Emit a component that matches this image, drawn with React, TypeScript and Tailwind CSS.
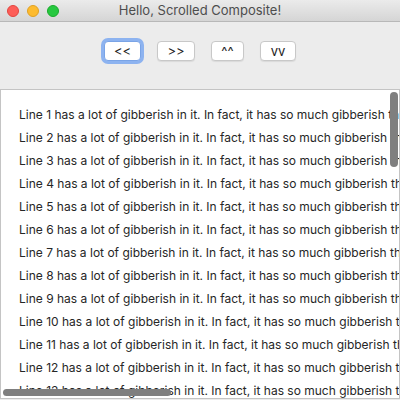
import React from "react";

const lines = Array.from({ length: 13 }, (_, i) => i + 1);

function Btn({ label, focused }: { label: string; focused?: boolean }) {
  return (
    <div
      className={
        "h-[20px] flex items-center justify-center bg-white rounded-[4px] text-[13px] leading-none text-[#1e1e1e] " +
        (focused
          ? "border border-[#7aa4e6] ring-[3px] ring-[#8db3f0]"
          : "border border-[#c8c8c8] shadow-[0_1px_1px_rgba(0,0,0,0.08)]")
      }
    >
      {label}
    </div>
  );
}

export default function App() {
  return (
    <div
      className="w-[400px] h-[400px] bg-[#ececec] flex flex-col overflow-hidden"
      style={{ fontFamily: "Inter, 'Noto Sans', sans-serif" }}
    >
      <div className="h-[22px] shrink-0 bg-gradient-to-b from-[#ebebeb] to-[#d5d5d5] border-b border-[#b8b8b8] flex items-center relative">
        <div className="flex items-center gap-[8px] pl-[7px]">
          <div className="w-[12px] h-[12px] rounded-full bg-[#fd5d57] border border-[#e2453f]" />
          <div className="w-[12px] h-[12px] rounded-full bg-[#fdbb2e] border border-[#e0a123]" />
          <div className="w-[12px] h-[12px] rounded-full bg-[#27c840] border border-[#1aab2b]" />
        </div>
        <div className="absolute inset-0 flex items-center justify-center text-[13px] text-[#4d4d4d]">
          Hello, Scrolled Composite!
        </div>
      </div>
      <div className="h-[67px] shrink-0 flex items-start justify-center pt-[19px] gap-[16px]">
        <div className="w-[37px]"><Btn label="<<" focused /></div>
        <div className="w-[38px]"><Btn label=">>" /></div>
        <div className="w-[33px]"><Btn label="^^" /></div>
        <div className="w-[36px]"><Btn label="vv" /></div>
      </div>
      <div className="flex-1 mb-[1px] bg-white border border-[#c4c4c4] relative overflow-hidden">
        <div className="pt-[13px] pl-[18px] flex flex-col">
          {lines.map((n) => (
            <div key={n} className="h-[23px] leading-[23px] whitespace-nowrap text-[12px] text-[#262626]">
              Line {n} has a lot of gibberish in it. In fact, it has so much gibberish that it goes on and on.
            </div>
          ))}
        </div>
        <div className="absolute right-[1px] top-[2px] w-[8px] h-[75px] rounded-full bg-[#7f7f7f]" />
        <div className="absolute left-[2px] bottom-[2px] w-[168px] h-[7px] rounded-full bg-[#7f7f7f]" />
      </div>
    </div>
  );
}
